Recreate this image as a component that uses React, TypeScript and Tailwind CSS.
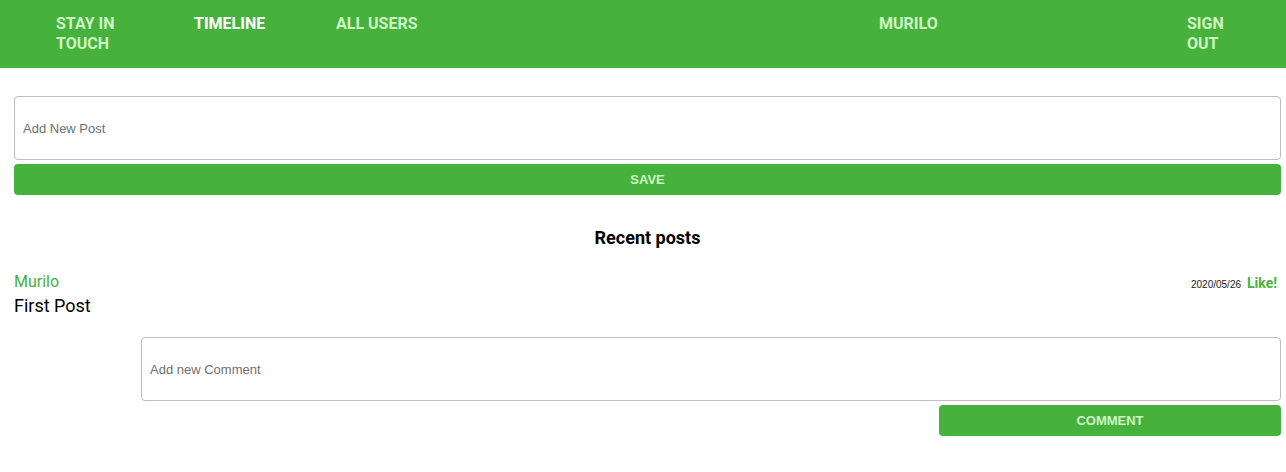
import React from "react";

const green = "bg-[#47b23b]";

const NavItem: React.FC<{ label: string; className?: string; active?: boolean }> = ({ label, className = "", active }) => (
  <a className={`${className} block font-bold uppercase text-[16px] leading-[20px] ${active ? "text-white" : "text-[#cdf5c6]"}`}>
    {label}
  </a>
);

export default function App() {
  return (
    <div className="min-h-[472px] bg-white font-['Roboto',sans-serif]">
      <header className={`${green} h-[68px] flex items-start pt-[14px]`}>
        <NavItem label="Stay in touch" className="ml-[56px] w-[90px]" />
        <NavItem label="Timeline" className="ml-[48px] w-[142px]" active />
        <NavItem label="All users" className="w-[120px]" />
        <NavItem label="Murilo" className="ml-[423px] w-[100px]" />
        <NavItem label="Sign out" className="ml-[208px] w-[50px]" />
      </header>

      <main className="pl-[14px] pr-[5px] pt-[28px]">
        <input
          placeholder="Add New Post"
          className="w-full h-[64px] border border-[#bdbdbd] rounded-[4px] px-[8px] text-[13px] font-['Liberation_Sans',sans-serif] placeholder:text-[#6f6f6f] outline-none"
        />
        <button className={`${green} mt-[4px] w-full h-[31px] rounded-[4px] text-[13px] font-bold text-[#cdf5c6] font-['Liberation_Sans',sans-serif]`}>
          SAVE
        </button>

        <h2 className="mt-[31px] text-center text-[18px] font-bold text-black leading-[24px]">Recent posts</h2>

        <div className="mt-[22px]">
          <div className="flex items-start justify-between">
            <div>
              <div className="text-[16px] leading-[20px] text-[#47b23b]">Murilo</div>
              <div className="text-[18px] leading-[24px] text-black mt-[2px]">First Post</div>
            </div>
            <div className="flex items-baseline gap-[6px] pr-[4px] pt-[1px]">
              <span className="text-[10px] text-[#222] font-['Liberation_Sans',sans-serif]">2020/05/26</span>
              <span className="text-[14px] font-bold text-[#47b23b]">Like!</span>
            </div>
          </div>

          <div className="ml-[127px] mt-[19px]">
            <input
              placeholder="Add new Comment"
              className="w-full h-[64px] border border-[#bdbdbd] rounded-[4px] px-[8px] text-[13px] font-['Liberation_Sans',sans-serif] placeholder:text-[#6f6f6f] outline-none"
            />
            <div className="flex justify-end mt-[4px]">
              <button className={`${green} w-[342px] h-[31px] rounded-[4px] text-[13px] font-bold text-[#cdf5c6] font-['Liberation_Sans',sans-serif]`}>
                COMMENT
              </button>
            </div>
          </div>
        </div>
      </main>
    </div>
  );
}
